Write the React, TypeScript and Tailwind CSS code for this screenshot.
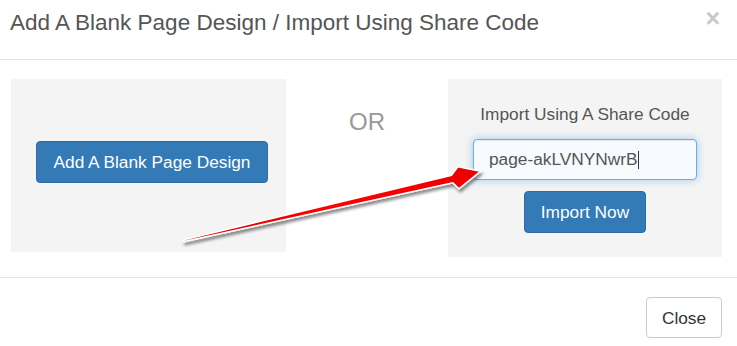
import React from 'react';

function Arrow() {
  // red callout arrow pointing at the share code field
  return (
    <svg
      className="absolute inset-0 pointer-events-none"
      width={737}
      height={346}
      viewBox="0 0 737 346"
    >
      <defs>
        <filter id="arrowShadow" x="-10%" y="-50%" width="120%" height="200%">
          <feDropShadow dx="1.5" dy="3" stdDeviation="1.6" floodColor="#000" floodOpacity="0.45" />
        </filter>
        <linearGradient id="arrowRed" x1="0" y1="0" x2="0" y2="1">
          <stop offset="0" stopColor="#e80000" />
          <stop offset="0.5" stopColor="#ff0000" />
          <stop offset="1" stopColor="#d40000" />
        </linearGradient>
      </defs>
      <polygon
        points="183,240 451.5,175.2 458,166.6 480.5,171.3 459,188.8 452.8,182.8 184,241.6"
        fill="url(#arrowRed)"
        stroke="#ffffff"
        strokeWidth={1.6}
        strokeLinejoin="miter"
        filter="url(#arrowShadow)"
      />
    </svg>
  );
}

export default function App() {
  return (
    <div
      className="relative w-[737px] h-[346px] overflow-hidden bg-white text-[#333]"
      style={{ fontFamily: '"Liberation Sans", Arial, sans-serif' }}
    >
      {/* Header */}
      <div className="flex justify-between items-start h-[60px] border-b border-[#e5e5e5]">
        <h4 className="pl-[10px] pt-[7px] text-[22.5px] leading-[31px] text-[#555] font-normal">
          Add A Blank Page Design / Import Using Share Code
        </h4>
        <span className="pr-[17px] pt-[6px] text-[25px] leading-[25px] font-bold text-[#c8c8c8]">
          ×
        </span>
      </div>

      {/* Body */}
      <div className="flex h-[217px] pt-[19px] px-[11px]">
        <div className="w-[275px] h-[173px] bg-[#f4f4f4] pl-[25px] pt-[62px]">
          <button className="w-[232px] h-[42px] rounded-[4px] bg-[#337ab7] border border-[#2e6da4] text-white text-[17.3px] leading-[24px]">
            Add A Blank Page Design
          </button>
        </div>

        <div className="w-[162px] pt-[26px] text-center text-[24px] leading-[34px] text-[#999]">
          OR
        </div>

        <div className="w-[274px] h-[178px] bg-[#f4f4f4] flex flex-col items-center pt-[23px]">
          <div className="text-[17.3px] leading-[24px] text-[#555]">
            Import Using A Share Code
          </div>
          <div className="mt-[13px] w-[224px] h-[41px] rounded-[4px] border border-[#66afe9] bg-[#f7fbff] shadow-[inset_0_1px_1px_rgba(0,0,0,0.075),0_0_8px_rgba(102,175,233,0.6)] flex items-center pl-[15px] text-[17.3px] text-[#555]">
            <span>page-akLVNYNwrB</span>
            <span className="w-px h-[18px] bg-[#333]" />
          </div>
          <button className="mt-[11px] w-[122px] h-[42px] rounded-[4px] bg-[#337ab7] border border-[#2e6da4] text-white text-[17.3px] leading-[24px]">
            Import Now
          </button>
        </div>
      </div>

      {/* Footer */}
      <div className="flex justify-end border-t border-[#e5e5e5] pr-[15px] pt-[19px]">
        <button className="w-[76px] h-[41px] rounded-[4px] border border-[#ccc] bg-white text-[#333] text-[17.3px] leading-[24px]">
          Close
        </button>
      </div>

      <Arrow />
    </div>
  );
}
